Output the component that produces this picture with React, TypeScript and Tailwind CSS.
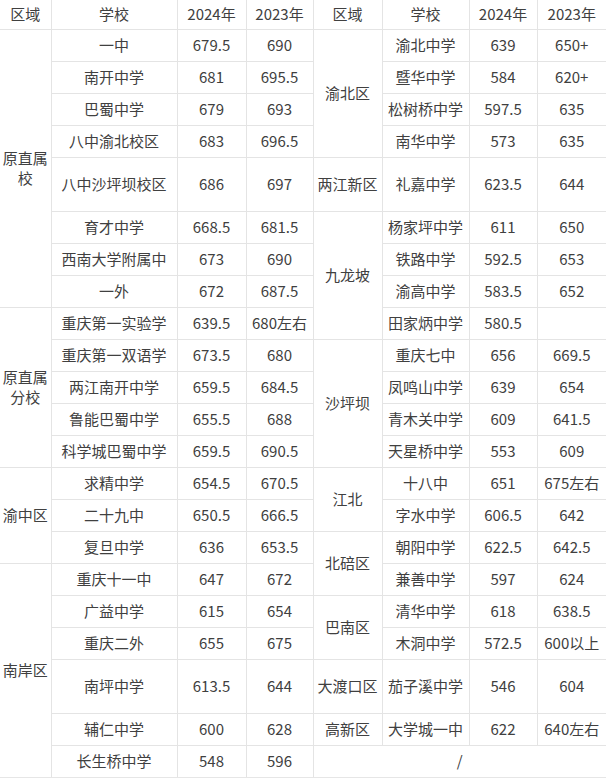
import React from 'react';

type Cell = { text: string; rowSpan?: number; colSpan?: number };
type Row = { tall?: boolean; cells: Cell[] };

const c = (text: string, rowSpan?: number, colSpan?: number): Cell => ({ text, rowSpan, colSpan });

// left half + right half share the same rows
const rows: Row[] = [
  { cells: [c('原直属校', 8), c('一中'), c('679.5'), c('690'), c('渝北区', 4), c('渝北中学'), c('639'), c('650+')] },
  { cells: [c('南开中学'), c('681'), c('695.5'), c('暨华中学'), c('584'), c('620+')] },
  { cells: [c('巴蜀中学'), c('679'), c('693'), c('松树桥中学'), c('597.5'), c('635')] },
  { cells: [c('八中渝北校区'), c('683'), c('696.5'), c('南华中学'), c('573'), c('635')] },
  { tall: true, cells: [c('八中沙坪坝校区'), c('686'), c('697'), c('两江新区'), c('礼嘉中学'), c('623.5'), c('644')] },
  { cells: [c('育才中学'), c('668.5'), c('681.5'), c('九龙坡', 4), c('杨家坪中学'), c('611'), c('650')] },
  { cells: [c('西南大学附属中'), c('673'), c('690'), c('铁路中学'), c('592.5'), c('653')] },
  { cells: [c('一外'), c('672'), c('687.5'), c('渝高中学'), c('583.5'), c('652')] },
  { cells: [c('原直属分校', 5), c('重庆第一实验学'), c('639.5'), c('680左右'), c('田家炳中学'), c('580.5'), c('')] },
  { cells: [c('重庆第一双语学'), c('673.5'), c('680'), c('沙坪坝', 4), c('重庆七中'), c('656'), c('669.5')] },
  { cells: [c('两江南开中学'), c('659.5'), c('684.5'), c('凤鸣山中学'), c('639'), c('654')] },
  { cells: [c('鲁能巴蜀中学'), c('655.5'), c('688'), c('青木关中学'), c('609'), c('641.5')] },
  { cells: [c('科学城巴蜀中学'), c('659.5'), c('690.5'), c('天星桥中学'), c('553'), c('609')] },
  { cells: [c('渝中区', 3), c('求精中学'), c('654.5'), c('670.5'), c('江北', 2), c('十八中'), c('651'), c('675左右')] },
  { cells: [c('二十九中'), c('650.5'), c('666.5'), c('字水中学'), c('606.5'), c('642')] },
  { cells: [c('复旦中学'), c('636'), c('653.5'), c('北碚区', 2), c('朝阳中学'), c('622.5'), c('642.5')] },
  { cells: [c('南岸区', 6), c('重庆十一中'), c('647'), c('672'), c('兼善中学'), c('597'), c('624')] },
  { cells: [c('广益中学'), c('615'), c('654'), c('巴南区', 2), c('清华中学'), c('618'), c('638.5')] },
  { cells: [c('重庆二外'), c('655'), c('675'), c('木洞中学'), c('572.5'), c('600以上')] },
  { tall: true, cells: [c('南坪中学'), c('613.5'), c('644'), c('大渡口区'), c('茄子溪中学'), c('546'), c('604')] },
  { cells: [c('辅仁中学'), c('600'), c('628'), c('高新区'), c('大学城一中'), c('622'), c('640左右')] },
  { cells: [c('长生桥中学'), c('548'), c('596'), c('/', 1, 4)] },
];

const head = ['区域', '学校', '2024年', '2023年', '区域', '学校', '2024年', '2023年'];
const widths = [51, 126, 69, 67, 69, 87, 68, 69];

export default function App() {
  return (
    <div
      className="w-[606px] h-[778px] overflow-hidden bg-white text-[#404040]"
      style={{ fontFamily: '"Noto Sans CJK SC", "Noto Sans", sans-serif' }}
    >
      <table className="table-fixed border-collapse border-hidden w-[606px] text-[15px] leading-[20px]">
        <colgroup>
          {widths.map((w, i) => (
            <col key={i} style={{ width: w }} />
          ))}
        </colgroup>
        <thead>
          <tr className="h-[29px]">
            {head.map((h, i) => (
              <th key={i} className="border border-[#e4e4e4] font-normal text-center p-0 whitespace-nowrap">
                {h}
              </th>
            ))}
          </tr>
        </thead>
        <tbody>
          {rows.map((r, i) => (
            <tr key={i} className={r.tall ? 'h-[54px]' : 'h-[32px]'}>
              {r.cells.map((cell, j) => (
                <td
                  key={j}
                  rowSpan={cell.rowSpan}
                  colSpan={cell.colSpan}
                  className="border border-[#e4e4e4] text-center p-0 whitespace-normal break-all"
                >
                  {cell.text}
                </td>
              ))}
            </tr>
          ))}
        </tbody>
      </table>
      <div className="h-[3px] bg-[#e6e6e6]" />
    </div>
  );
}
